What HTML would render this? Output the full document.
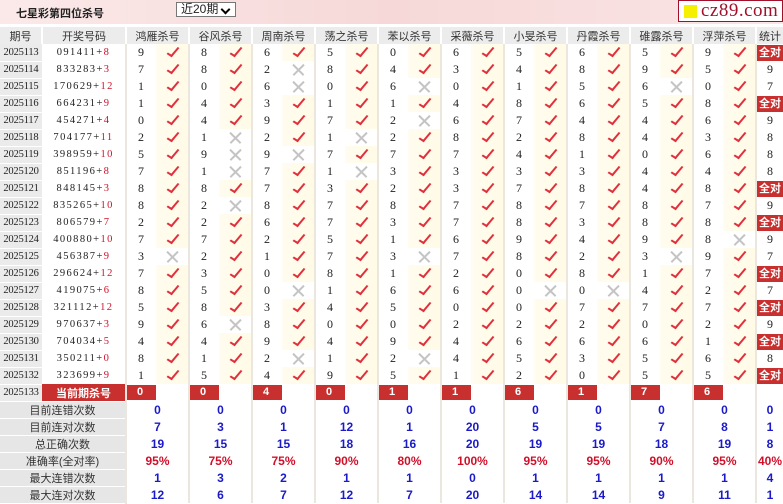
<!DOCTYPE html>
<html><head><meta charset="utf-8"><style>
*{margin:0;padding:0;box-sizing:border-box}
body{width:783px;height:504px;overflow:hidden;background:#fff;font-family:"Liberation Serif","Noto Serif CJK SC",serif;font-size:12px;color:#222;position:relative}
.top{height:24px;background:linear-gradient(to right,#fbe9e9,#f6d8d8 50%,#fbe5e5);position:relative}
.top .t{position:absolute;left:16px;top:5px;font-family:"Liberation Sans","Noto Sans CJK SC",sans-serif;font-weight:bold;font-size:11px;color:#222}
.sel{position:absolute;left:176px;top:2px;width:60px;height:15px;border:1px solid #777;background:#fff;font-family:"Liberation Sans","Noto Sans CJK SC",sans-serif;font-size:12px;line-height:13px;padding-left:4px}
.sel:after{content:"";position:absolute;right:6px;top:3px;width:5px;height:5px;border-right:2px solid #000;border-bottom:2px solid #000;transform:rotate(45deg)}
.logo{position:absolute;left:678px;top:0;width:105px;height:22px;background:#fff;border:1px solid #a0102a;font-family:"Liberation Serif",serif;font-size:19px;color:#a0102a;line-height:19px;padding-left:22px;letter-spacing:.5px}
.logo:before{content:"";position:absolute;left:5px;top:4px;width:13px;height:13px;background:#f5ef00}
table{position:absolute;left:0;top:27px;border-collapse:collapse;table-layout:fixed;width:783px}
td{height:17px;padding:0;white-space:nowrap;overflow:hidden;vertical-align:middle}
tr.h td{background:#ececec;text-align:center;font-family:"Liberation Sans","Noto Sans CJK SC",sans-serif;font-size:11px;color:#333;border-left:2px solid #fff}
td.q{background:#ebebeb;text-align:center;border-bottom:1px solid #fff;font-size:10.5px;letter-spacing:-0.2px}
td.k{text-align:center;letter-spacing:1.4px;font-size:10.5px}
td.k em{font-style:normal;color:#d0102a}
td.n{padding-left:11px;border-left:2px solid #ebe7df;font-size:12px}
td.y{background:linear-gradient(to right,#fffcf0,#fffbe6);position:relative}
td.y i{position:absolute;left:14px;top:1px;width:6px;height:12px;border-right:2px solid #e0303c;border-bottom:2px solid #e0303c;transform:rotate(40deg) skewY(-8deg)}
td.x{position:relative}
td.x b:before,td.x b:after{content:"";position:absolute;left:9px;top:8px;width:15px;height:1.5px;background:#c4c4c4;transform:rotate(45deg)}
td.x b:after{transform:rotate(-45deg)}
td.s{text-align:center;border-left:2px solid #ebe7df;font-size:12px}
td.s span{display:block;background:#c8302f;color:#fff;font-weight:bold;font-family:"Liberation Sans","Noto Sans CJK SC",sans-serif;font-size:11px;height:16px;line-height:16px}
td.r{background:#c8302f;color:#fff;font-weight:bold;text-align:center;font-family:"Liberation Sans","Noto Sans CJK SC",sans-serif;font-size:11px}
td.c{border-left:2px solid #ebe7df;padding:1px 0}
td.c span{display:block;width:29px;height:15px;background:#c8302f;color:#fff;font-weight:bold;padding-left:10px;line-height:15px;font-size:11px;font-family:"Liberation Sans",sans-serif}
tr.st td{height:17px;text-align:center;font-family:"Liberation Sans",sans-serif;font-weight:bold;color:#1a1ac8;font-size:12px;border-left:2px solid #ebe7df}
tr.st td.l{background:#e6e6e6;color:#333;font-weight:normal;font-family:"Liberation Sans","Noto Sans CJK SC",sans-serif;font-size:11px;border-bottom:1px solid #fff;border-left:0}
tr.pc td{color:#d0102a}
tr.pc td.l{color:#333}
</style></head><body>
<div class="top"><span class="t">七星彩第四位杀号</span><div class="sel">近20期</div><div class="logo">cz89.com</div></div>
<table>
<colgroup><col style="width:42px"><col style="width:84px">
<col style="width:30px"><col style="width:33px"><col style="width:30px"><col style="width:33px"><col style="width:30px"><col style="width:33px"><col style="width:30px"><col style="width:33px"><col style="width:30px"><col style="width:33px"><col style="width:30px"><col style="width:33px"><col style="width:30px"><col style="width:33px"><col style="width:30px"><col style="width:33px"><col style="width:30px"><col style="width:33px"><col style="width:30px"><col style="width:33px"><col style="width:27px"></colgroup>
<tr class="h"><td style="border-left:0">期号</td><td>开奖号码</td><td colspan="2">鸿雁杀号</td><td colspan="2">谷风杀号</td><td colspan="2">周南杀号</td><td colspan="2">荡之杀号</td><td colspan="2">苯以杀号</td><td colspan="2">采薇杀号</td><td colspan="2">小旻杀号</td><td colspan="2">丹霞杀号</td><td colspan="2">碓露杀号</td><td colspan="2">浮萍杀号</td><td>统计</td></tr>
<tr><td class="q">2025113</td><td class="k">091411+<em>8</em></td><td class="n">9</td><td class="y"><i></i></td><td class="n">8</td><td class="y"><i></i></td><td class="n">6</td><td class="y"><i></i></td><td class="n">5</td><td class="y"><i></i></td><td class="n">0</td><td class="y"><i></i></td><td class="n">6</td><td class="y"><i></i></td><td class="n">5</td><td class="y"><i></i></td><td class="n">6</td><td class="y"><i></i></td><td class="n">5</td><td class="y"><i></i></td><td class="n">9</td><td class="y"><i></i></td><td class="s"><span>全对</span></td></tr>
<tr><td class="q">2025114</td><td class="k">833283+<em>3</em></td><td class="n">7</td><td class="y"><i></i></td><td class="n">8</td><td class="y"><i></i></td><td class="n">2</td><td class="x"><b></b></td><td class="n">8</td><td class="y"><i></i></td><td class="n">4</td><td class="y"><i></i></td><td class="n">3</td><td class="y"><i></i></td><td class="n">4</td><td class="y"><i></i></td><td class="n">8</td><td class="y"><i></i></td><td class="n">9</td><td class="y"><i></i></td><td class="n">5</td><td class="y"><i></i></td><td class="s">9</td></tr>
<tr><td class="q">2025115</td><td class="k">170629+<em>12</em></td><td class="n">1</td><td class="y"><i></i></td><td class="n">0</td><td class="y"><i></i></td><td class="n">6</td><td class="x"><b></b></td><td class="n">0</td><td class="y"><i></i></td><td class="n">6</td><td class="x"><b></b></td><td class="n">0</td><td class="y"><i></i></td><td class="n">1</td><td class="y"><i></i></td><td class="n">5</td><td class="y"><i></i></td><td class="n">6</td><td class="x"><b></b></td><td class="n">0</td><td class="y"><i></i></td><td class="s">7</td></tr>
<tr><td class="q">2025116</td><td class="k">664231+<em>9</em></td><td class="n">1</td><td class="y"><i></i></td><td class="n">4</td><td class="y"><i></i></td><td class="n">3</td><td class="y"><i></i></td><td class="n">1</td><td class="y"><i></i></td><td class="n">1</td><td class="y"><i></i></td><td class="n">4</td><td class="y"><i></i></td><td class="n">8</td><td class="y"><i></i></td><td class="n">6</td><td class="y"><i></i></td><td class="n">5</td><td class="y"><i></i></td><td class="n">8</td><td class="y"><i></i></td><td class="s"><span>全对</span></td></tr>
<tr><td class="q">2025117</td><td class="k">454271+<em>4</em></td><td class="n">0</td><td class="y"><i></i></td><td class="n">4</td><td class="y"><i></i></td><td class="n">9</td><td class="y"><i></i></td><td class="n">7</td><td class="y"><i></i></td><td class="n">2</td><td class="x"><b></b></td><td class="n">6</td><td class="y"><i></i></td><td class="n">7</td><td class="y"><i></i></td><td class="n">4</td><td class="y"><i></i></td><td class="n">4</td><td class="y"><i></i></td><td class="n">6</td><td class="y"><i></i></td><td class="s">9</td></tr>
<tr><td class="q">2025118</td><td class="k">704177+<em>11</em></td><td class="n">2</td><td class="y"><i></i></td><td class="n">1</td><td class="x"><b></b></td><td class="n">2</td><td class="y"><i></i></td><td class="n">1</td><td class="x"><b></b></td><td class="n">2</td><td class="y"><i></i></td><td class="n">8</td><td class="y"><i></i></td><td class="n">2</td><td class="y"><i></i></td><td class="n">8</td><td class="y"><i></i></td><td class="n">4</td><td class="y"><i></i></td><td class="n">3</td><td class="y"><i></i></td><td class="s">8</td></tr>
<tr><td class="q">2025119</td><td class="k">398959+<em>10</em></td><td class="n">5</td><td class="y"><i></i></td><td class="n">9</td><td class="x"><b></b></td><td class="n">9</td><td class="x"><b></b></td><td class="n">7</td><td class="y"><i></i></td><td class="n">7</td><td class="y"><i></i></td><td class="n">7</td><td class="y"><i></i></td><td class="n">4</td><td class="y"><i></i></td><td class="n">1</td><td class="y"><i></i></td><td class="n">0</td><td class="y"><i></i></td><td class="n">6</td><td class="y"><i></i></td><td class="s">8</td></tr>
<tr><td class="q">2025120</td><td class="k">851196+<em>8</em></td><td class="n">7</td><td class="y"><i></i></td><td class="n">1</td><td class="x"><b></b></td><td class="n">7</td><td class="y"><i></i></td><td class="n">1</td><td class="x"><b></b></td><td class="n">3</td><td class="y"><i></i></td><td class="n">3</td><td class="y"><i></i></td><td class="n">3</td><td class="y"><i></i></td><td class="n">3</td><td class="y"><i></i></td><td class="n">4</td><td class="y"><i></i></td><td class="n">4</td><td class="y"><i></i></td><td class="s">8</td></tr>
<tr><td class="q">2025121</td><td class="k">848145+<em>3</em></td><td class="n">8</td><td class="y"><i></i></td><td class="n">8</td><td class="y"><i></i></td><td class="n">7</td><td class="y"><i></i></td><td class="n">3</td><td class="y"><i></i></td><td class="n">2</td><td class="y"><i></i></td><td class="n">3</td><td class="y"><i></i></td><td class="n">7</td><td class="y"><i></i></td><td class="n">8</td><td class="y"><i></i></td><td class="n">4</td><td class="y"><i></i></td><td class="n">8</td><td class="y"><i></i></td><td class="s"><span>全对</span></td></tr>
<tr><td class="q">2025122</td><td class="k">835265+<em>10</em></td><td class="n">8</td><td class="y"><i></i></td><td class="n">2</td><td class="x"><b></b></td><td class="n">8</td><td class="y"><i></i></td><td class="n">7</td><td class="y"><i></i></td><td class="n">8</td><td class="y"><i></i></td><td class="n">7</td><td class="y"><i></i></td><td class="n">8</td><td class="y"><i></i></td><td class="n">7</td><td class="y"><i></i></td><td class="n">8</td><td class="y"><i></i></td><td class="n">7</td><td class="y"><i></i></td><td class="s">9</td></tr>
<tr><td class="q">2025123</td><td class="k">806579+<em>7</em></td><td class="n">2</td><td class="y"><i></i></td><td class="n">2</td><td class="y"><i></i></td><td class="n">6</td><td class="y"><i></i></td><td class="n">7</td><td class="y"><i></i></td><td class="n">3</td><td class="y"><i></i></td><td class="n">7</td><td class="y"><i></i></td><td class="n">8</td><td class="y"><i></i></td><td class="n">3</td><td class="y"><i></i></td><td class="n">8</td><td class="y"><i></i></td><td class="n">8</td><td class="y"><i></i></td><td class="s"><span>全对</span></td></tr>
<tr><td class="q">2025124</td><td class="k">400880+<em>10</em></td><td class="n">7</td><td class="y"><i></i></td><td class="n">7</td><td class="y"><i></i></td><td class="n">2</td><td class="y"><i></i></td><td class="n">5</td><td class="y"><i></i></td><td class="n">1</td><td class="y"><i></i></td><td class="n">6</td><td class="y"><i></i></td><td class="n">9</td><td class="y"><i></i></td><td class="n">4</td><td class="y"><i></i></td><td class="n">9</td><td class="y"><i></i></td><td class="n">8</td><td class="x"><b></b></td><td class="s">9</td></tr>
<tr><td class="q">2025125</td><td class="k">456387+<em>9</em></td><td class="n">3</td><td class="x"><b></b></td><td class="n">2</td><td class="y"><i></i></td><td class="n">1</td><td class="y"><i></i></td><td class="n">7</td><td class="y"><i></i></td><td class="n">3</td><td class="x"><b></b></td><td class="n">7</td><td class="y"><i></i></td><td class="n">8</td><td class="y"><i></i></td><td class="n">2</td><td class="y"><i></i></td><td class="n">3</td><td class="x"><b></b></td><td class="n">9</td><td class="y"><i></i></td><td class="s">7</td></tr>
<tr><td class="q">2025126</td><td class="k">296624+<em>12</em></td><td class="n">7</td><td class="y"><i></i></td><td class="n">3</td><td class="y"><i></i></td><td class="n">0</td><td class="y"><i></i></td><td class="n">8</td><td class="y"><i></i></td><td class="n">1</td><td class="y"><i></i></td><td class="n">2</td><td class="y"><i></i></td><td class="n">0</td><td class="y"><i></i></td><td class="n">8</td><td class="y"><i></i></td><td class="n">1</td><td class="y"><i></i></td><td class="n">7</td><td class="y"><i></i></td><td class="s"><span>全对</span></td></tr>
<tr><td class="q">2025127</td><td class="k">419075+<em>6</em></td><td class="n">8</td><td class="y"><i></i></td><td class="n">5</td><td class="y"><i></i></td><td class="n">0</td><td class="x"><b></b></td><td class="n">1</td><td class="y"><i></i></td><td class="n">6</td><td class="y"><i></i></td><td class="n">6</td><td class="y"><i></i></td><td class="n">0</td><td class="x"><b></b></td><td class="n">0</td><td class="x"><b></b></td><td class="n">4</td><td class="y"><i></i></td><td class="n">2</td><td class="y"><i></i></td><td class="s">7</td></tr>
<tr><td class="q">2025128</td><td class="k">321112+<em>12</em></td><td class="n">5</td><td class="y"><i></i></td><td class="n">8</td><td class="y"><i></i></td><td class="n">3</td><td class="y"><i></i></td><td class="n">4</td><td class="y"><i></i></td><td class="n">5</td><td class="y"><i></i></td><td class="n">0</td><td class="y"><i></i></td><td class="n">0</td><td class="y"><i></i></td><td class="n">7</td><td class="y"><i></i></td><td class="n">7</td><td class="y"><i></i></td><td class="n">7</td><td class="y"><i></i></td><td class="s"><span>全对</span></td></tr>
<tr><td class="q">2025129</td><td class="k">970637+<em>3</em></td><td class="n">9</td><td class="y"><i></i></td><td class="n">6</td><td class="x"><b></b></td><td class="n">8</td><td class="y"><i></i></td><td class="n">0</td><td class="y"><i></i></td><td class="n">0</td><td class="y"><i></i></td><td class="n">2</td><td class="y"><i></i></td><td class="n">2</td><td class="y"><i></i></td><td class="n">2</td><td class="y"><i></i></td><td class="n">0</td><td class="y"><i></i></td><td class="n">2</td><td class="y"><i></i></td><td class="s">9</td></tr>
<tr><td class="q">2025130</td><td class="k">704034+<em>5</em></td><td class="n">4</td><td class="y"><i></i></td><td class="n">4</td><td class="y"><i></i></td><td class="n">9</td><td class="y"><i></i></td><td class="n">4</td><td class="y"><i></i></td><td class="n">9</td><td class="y"><i></i></td><td class="n">4</td><td class="y"><i></i></td><td class="n">6</td><td class="y"><i></i></td><td class="n">6</td><td class="y"><i></i></td><td class="n">6</td><td class="y"><i></i></td><td class="n">1</td><td class="y"><i></i></td><td class="s"><span>全对</span></td></tr>
<tr><td class="q">2025131</td><td class="k">350211+<em>0</em></td><td class="n">8</td><td class="y"><i></i></td><td class="n">1</td><td class="y"><i></i></td><td class="n">2</td><td class="x"><b></b></td><td class="n">1</td><td class="y"><i></i></td><td class="n">2</td><td class="x"><b></b></td><td class="n">4</td><td class="y"><i></i></td><td class="n">5</td><td class="y"><i></i></td><td class="n">3</td><td class="y"><i></i></td><td class="n">5</td><td class="y"><i></i></td><td class="n">6</td><td class="y"><i></i></td><td class="s">8</td></tr>
<tr><td class="q">2025132</td><td class="k">323699+<em>9</em></td><td class="n">1</td><td class="y"><i></i></td><td class="n">5</td><td class="y"><i></i></td><td class="n">4</td><td class="y"><i></i></td><td class="n">9</td><td class="y"><i></i></td><td class="n">5</td><td class="y"><i></i></td><td class="n">1</td><td class="y"><i></i></td><td class="n">2</td><td class="y"><i></i></td><td class="n">0</td><td class="y"><i></i></td><td class="n">5</td><td class="y"><i></i></td><td class="n">5</td><td class="y"><i></i></td><td class="s"><span>全对</span></td></tr>
<tr><td class="q">2025133</td><td class="r">当前期杀号</td><td class="c" colspan="2"><span>0</span></td><td class="c" colspan="2"><span>0</span></td><td class="c" colspan="2"><span>4</span></td><td class="c" colspan="2"><span>0</span></td><td class="c" colspan="2"><span>1</span></td><td class="c" colspan="2"><span>1</span></td><td class="c" colspan="2"><span>6</span></td><td class="c" colspan="2"><span>1</span></td><td class="c" colspan="2"><span>7</span></td><td class="c" colspan="2"><span>6</span></td><td class="s"></td></tr>
<tr class="st"><td class="l" colspan="2">目前连错次数</td><td colspan="2">0</td><td colspan="2">0</td><td colspan="2">0</td><td colspan="2">0</td><td colspan="2">0</td><td colspan="2">0</td><td colspan="2">0</td><td colspan="2">0</td><td colspan="2">0</td><td colspan="2">0</td><td>0</td></tr>
<tr class="st"><td class="l" colspan="2">目前连对次数</td><td colspan="2">7</td><td colspan="2">3</td><td colspan="2">1</td><td colspan="2">12</td><td colspan="2">1</td><td colspan="2">20</td><td colspan="2">5</td><td colspan="2">5</td><td colspan="2">7</td><td colspan="2">8</td><td>1</td></tr>
<tr class="st"><td class="l" colspan="2">总正确次数</td><td colspan="2">19</td><td colspan="2">15</td><td colspan="2">15</td><td colspan="2">18</td><td colspan="2">16</td><td colspan="2">20</td><td colspan="2">19</td><td colspan="2">19</td><td colspan="2">18</td><td colspan="2">19</td><td>8</td></tr>
<tr class="st pc"><td class="l" colspan="2">准确率(全对率)</td><td colspan="2">95%</td><td colspan="2">75%</td><td colspan="2">75%</td><td colspan="2">90%</td><td colspan="2">80%</td><td colspan="2">100%</td><td colspan="2">95%</td><td colspan="2">95%</td><td colspan="2">90%</td><td colspan="2">95%</td><td>40%</td></tr>
<tr class="st"><td class="l" colspan="2">最大连错次数</td><td colspan="2">1</td><td colspan="2">3</td><td colspan="2">2</td><td colspan="2">1</td><td colspan="2">1</td><td colspan="2">0</td><td colspan="2">1</td><td colspan="2">1</td><td colspan="2">1</td><td colspan="2">1</td><td>4</td></tr>
<tr class="st"><td class="l" colspan="2">最大连对次数</td><td colspan="2">12</td><td colspan="2">6</td><td colspan="2">7</td><td colspan="2">12</td><td colspan="2">7</td><td colspan="2">20</td><td colspan="2">14</td><td colspan="2">14</td><td colspan="2">9</td><td colspan="2">11</td><td>1</td></tr>
</table>
</body></html>
